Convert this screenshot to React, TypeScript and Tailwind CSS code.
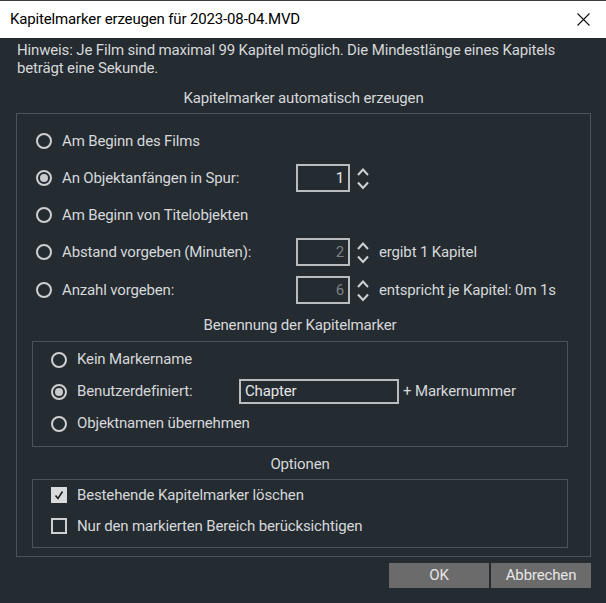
import React from 'react';

const Radio = ({ checked }: { checked?: boolean }) => (
  <span className="w-[16px] h-[16px] shrink-0 rounded-full border-2 border-[#cdd0d2] flex items-center justify-center">
    {checked && <span className="w-[8px] h-[8px] rounded-full bg-[#c9cccf]" />}
  </span>
);

const Checkbox = ({ checked }: { checked?: boolean }) =>
  checked ? (
    <span className="w-[16px] h-[16px] shrink-0 bg-[#d9dadb] flex items-center justify-center">
      <svg width="12" height="12" viewBox="0 0 12 12">
        <path d="M2.5 6.5 L5 9.5 L9.5 2.5" fill="none" stroke="#1c1f22" strokeWidth="1.6" />
      </svg>
    </span>
  ) : (
    <span className="w-[16px] h-[16px] shrink-0 border-2 border-[#cdd0d2]" />
  );

const Spinner = () => (
  <svg width="12" height="28" viewBox="0 0 12 28" className="shrink-0">
    <path d="M1 11 L6 5.5 L11 11" fill="none" stroke="#cfd2d4" strokeWidth="2" />
    <path d="M1 18.5 L6 24 L11 18.5" fill="none" stroke="#cfd2d4" strokeWidth="2" />
  </svg>
);

const NumberBox = ({ value, disabled }: { value: string; disabled?: boolean }) => (
  <div className="flex items-center">
    <div
      className={`w-[54px] h-[28px] border-2 border-[#b9bdc0] flex items-center justify-end pr-[4px] ${
        disabled ? 'text-[#7b8084]' : 'text-[#e4e6e8]'
      }`}
    >
      {value}
    </div>
    <div className="ml-[7px]">
      <Spinner />
    </div>
  </div>
);

const RadioRow = ({
  label,
  checked,
  className = '',
  children,
}: {
  label: string;
  checked?: boolean;
  className?: string;
  children?: React.ReactNode;
}) => (
  <div className={`flex items-center h-[28px] ${className}`}>
    <div className="w-[260px] flex items-center gap-[10px]">
      <Radio checked={checked} />
      <span>{label}</span>
    </div>
    {children}
  </div>
);

export default function App() {
  return (
    <div className="w-[606px] h-[603px] overflow-hidden bg-[#242b31] text-[#d6d8da] flex flex-col font-[Roboto,'Noto_Sans',sans-serif] text-[15px] tracking-[-0.15px]">
      {/* title bar */}
      <div className="h-[38px] shrink-0 bg-white border-t border-[#3c3c3c] flex items-center justify-between pl-[10px] pr-[16px] text-black text-[15px]">
        <span>Kapitelmarker erzeugen für 2023-08-04.MVD</span>
        <svg width="13" height="13" viewBox="0 0 13 13">
          <path d="M0.5 0.5 L12.5 12.5 M12.5 0.5 L0.5 12.5" stroke="#111" strokeWidth="1.1" />
        </svg>
      </div>

      <div className="pl-[17px] pr-[20px] pt-[3px] leading-[18px]">
        Hinweis: Je Film sind maximal 99 Kapitel möglich. Die Mindestlänge eines Kapitels beträgt eine Sekunde.
      </div>

      <div className="mt-[12px] ml-[16px] w-[575px] text-center leading-[18px]">
        Kapitelmarker automatisch erzeugen
      </div>

      <div className="mt-[6px] ml-[16px] w-[575px] h-[444px] shrink-0 border border-[#4b545c]">
        <div className="pt-[13px] pl-[19px] flex flex-col">
          <RadioRow label="Am Beginn des Films" />
          <RadioRow label="An Objektanfängen in Spur:" checked className="mt-[9px]">
            <NumberBox value="1" />
          </RadioRow>
          <RadioRow label="Am Beginn von Titelobjekten" className="mt-[9px]" />
          <RadioRow label="Abstand vorgeben (Minuten):" className="mt-[9px]">
            <NumberBox value="2" disabled />
            <span className="ml-[10px]">ergibt 1 Kapitel</span>
          </RadioRow>
          <RadioRow label="Anzahl vorgeben:" className="mt-[10px]">
            <NumberBox value="6" disabled />
            <span className="ml-[10px]">entspricht je Kapitel: 0m 1s</span>
          </RadioRow>
        </div>

        <div className="mt-[12px] ml-[15px] w-[536px] text-center leading-[18px]">
          Benennung der Kapitelmarker
        </div>
        <div className="mt-[7px] ml-[15px] w-[536px] h-[106px] border border-[#4b545c] pt-[5px] pl-[18px] flex flex-col gap-[7px]">
          <div className="h-[25px] flex items-center gap-[10px]">
            <Radio />
            <span>Kein Markername</span>
          </div>
          <div className="h-[25px] flex items-center">
            <div className="w-[188px] flex items-center gap-[10px]">
              <Radio checked />
              <span>Benutzerdefiniert:</span>
            </div>
            <div className="w-[160px] h-[25px] border-2 border-[#b9bdc0] flex items-center pl-[4px] text-[#e4e6e8]">
              Chapter
            </div>
            <span className="ml-[4px]">+ Markernummer</span>
          </div>
          <div className="h-[25px] flex items-center gap-[10px]">
            <Radio />
            <span>Objektnamen übernehmen</span>
          </div>
        </div>

        <div className="mt-[8px] ml-[15px] w-[536px] text-center leading-[18px]">Optionen</div>
        <div className="mt-[6px] ml-[15px] w-[536px] h-[69px] border border-[#4b545c] pt-[7px] pl-[18px] flex flex-col gap-[15px]">
          <div className="h-[16px] flex items-center gap-[10px]">
            <Checkbox checked />
            <span>Bestehende Kapitelmarker löschen</span>
          </div>
          <div className="h-[16px] flex items-center gap-[10px]">
            <Checkbox />
            <span>Nur den markierten Bereich berücksichtigen</span>
          </div>
        </div>
      </div>

      <div className="mt-[6px] pr-[15px] flex justify-end gap-[2px]">
        <button className="w-[100px] h-[25px] bg-[#6b6b6b] text-[#e6e6e6] flex items-center justify-center">
          OK
        </button>
        <button className="w-[100px] h-[25px] bg-[#6b6b6b] text-[#e6e6e6] flex items-center justify-center">
          Abbrechen
        </button>
      </div>
    </div>
  );
}
